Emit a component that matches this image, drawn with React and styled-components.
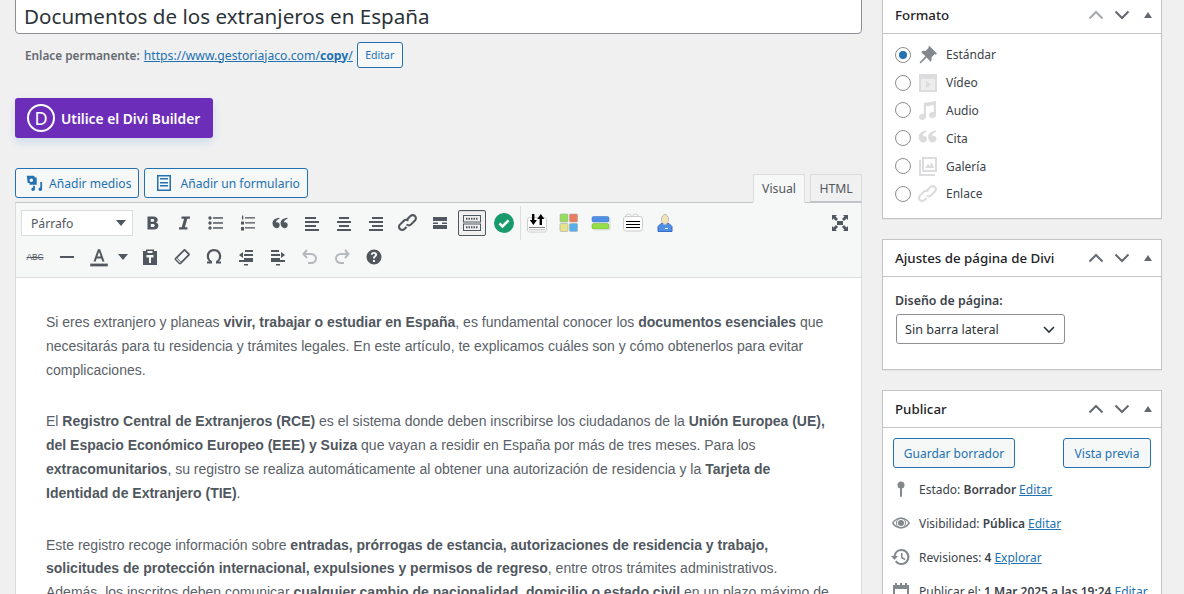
import React from 'react';
import styled, {createGlobalStyle} from 'styled-components';

const GlobalStyle = createGlobalStyle`
  html, body {
    margin: 0;
    height: 594px;
    overflow: hidden;
    background: #f0f0f1;
  }
`;

const uiFont = `"Noto Sans", "Open Sans", sans-serif`;

const Page = styled.div`
  display: flex;
  align-items: flex-start;
  gap: 20px;
  height: 594px;
  overflow: hidden;
  padding: 0 22px 0 15px;
  font-family: ${uiFont};
  font-size: 13px;
  color: #3c434a;
`;

const Main = styled.div`
  width: 847px;
  flex: none;
  margin-top: -7px;
`;

const Side = styled.div`
  width: 280px;
  flex: none;
  margin-top: -4px;
`;

const TitleInput = styled.div`
  height: 41px;
  box-sizing: border-box;
  background: #fff;
  border: 1px solid #8c8f94;
  border-radius: 4px;
  padding: 0 8px;
  font-size: 20.6px;
  line-height: 44px;
  color: #2c3338;
  white-space: nowrap;
`;

const PermaRow = styled.div`
  display: flex;
  align-items: center;
  height: 26px;
  margin: 8px 0 0 10px;
  font-size: 12.2px;
  color: #646970;
`;

const PermaLabel = styled.strong`
  font-size: 11.8px;
  font-weight: 600;
  margin-right: 4px;
`;

const Link = styled.a`
  color: #2271b1;
  text-decoration: underline;
`;

const SmallButton = styled.span`
  display: inline-flex;
  align-items: center;
  justify-content: center;
  box-sizing: border-box;
  width: 46px;
  height: 26px;
  margin-left: 4px;
  border: 1px solid #2271b1;
  border-radius: 3px;
  background: #f6f7f7;
  color: #2271b1;
  font-size: 10.5px;
`;

const DiviButton = styled.div`
  display: flex;
  align-items: center;
  gap: 6px;
  box-sizing: border-box;
  width: 198px;
  height: 40px;
  margin-top: 30px;
  padding-left: 12px;
  background: #6c2eb9;
  border-radius: 3px;
  box-shadow: 0 4px 8px rgba(43, 135, 218, 0.18);
  color: #fff;
  font-size: 13.8px;
  font-weight: 600;
`;

const DiviMark = styled.span`
  display: flex;
  align-items: center;
  justify-content: center;
  box-sizing: border-box;
  width: 28px;
  height: 28px;
  border: 2px solid #fff;
  border-radius: 50%;
  font-size: 18px;
  font-weight: 400;
`;

const EditorTools = styled.div`
  display: flex;
  align-items: flex-end;
  margin-top: 30px;
  height: 34px;
`;

const MediaButton = styled.div`
  display: flex;
  align-items: center;
  gap: 6px;
  box-sizing: border-box;
  height: 30px;
  margin: 0 5px 4px 0;
  padding: 0 7px 0 9px;
  border: 1px solid #2271b1;
  border-radius: 3px;
  background: #f6f7f7;
  color: #2271b1;
  font-size: 12.1px;
`;

const Tabs = styled.div`
  display: flex;
  align-items: flex-start;
  gap: 5px;
  margin-left: auto;
`;

const Tab = styled.div`
  display: flex;
  align-items: center;
  justify-content: center;
  box-sizing: border-box;
  width: 52px;
  height: ${p => (p.$active ? '29px' : '28px')};
  margin-bottom: ${p => (p.$active ? '-1px' : '0')};
  border: 1px solid #dcdcde;
  border-bottom: ${p => (p.$active ? '1px solid #f6f7f7' : '1px solid #c3c4c7')};
  background: ${p => (p.$active ? '#f6f7f7' : '#f0f0f1')};
  color: #50575e;
  font-size: 12.2px;
  position: relative;
`;

const Editor = styled.div`
  border: 1px solid #dcdcde;
  border-top-color: #c3c4c7;
  background: #fff;
`;

const Toolbar = styled.div`
  box-sizing: border-box;
  background: #f6f7f7;
  border-bottom: 1px solid #dcdcde;
  padding: 3px 7px 0 5px;
  height: 75px;
`;

const ToolRow = styled.div`
  display: flex;
  align-items: center;
  height: 34px;
`;

const FormatSelect = styled.div`
  display: flex;
  align-items: center;
  justify-content: space-between;
  box-sizing: border-box;
  width: 112px;
  height: 26px;
  margin-right: 5px;
  padding: 0 6px 0 9px;
  background: #fff;
  border: 1px solid #dcdcde;
  color: #50575e;
  font-size: 12.2px;
`;

const Caret = styled.span`
  width: 0;
  height: 0;
  border-left: 5px solid transparent;
  border-right: 5px solid transparent;
  border-top: 6px solid #50575e;
`;

const ToolBtn = styled.div`
  display: flex;
  align-items: center;
  justify-content: center;
  box-sizing: border-box;
  flex: none;
  width: ${p => p.$w || 28}px;
  height: 26px;
  margin-right: ${p => (p.$tight ? 0 : 4)}px;
  margin-left: ${p => (p.$push ? 'auto' : '0')};
  border: 1px solid ${p => (p.$active ? '#50575e' : 'transparent')};
  border-radius: 2px;
  background: ${p => (p.$active ? '#f0f0f1' : 'transparent')};
  box-shadow: ${p => (p.$active ? 'inset 0 1px 0 #ddd' : 'none')};
  color: ${p => (p.$off ? '#b4b9be' : '#50575e')};
`;

const StrikeLabel = styled.span`
  font-family: "Liberation Sans", Arial, sans-serif;
  font-size: 8.5px;
  letter-spacing: -0.2px;
  text-decoration: line-through;
  color: #50575e;
`;

const ToolDivider = styled.span`
  flex: none;
  width: 1px;
  height: 34px;
  background: #dcdcde;
  margin: 0 2px 0 -2px;
`;

const Content = styled.div`
  padding: 33px 30px 0;
  height: 400px;
  overflow: hidden;
  font-family: "Liberation Sans", Arial, sans-serif;
  font-size: 14px;
  line-height: 23.8px;
  color: #5a6168;
`;

const Para = styled.p`
  margin: 0 0 28px;
  strong {
    color: #50575e;
  }
`;

const Box = styled.section`
  background: #fff;
  border: 1px solid #c3c4c7;
  box-shadow: 0 1px 1px rgba(0, 0, 0, 0.04);
  margin-bottom: 20px;
  height: ${p => p.$h}px;
  box-sizing: border-box;
`;

const BoxHead = styled.header`
  display: flex;
  align-items: center;
  box-sizing: border-box;
  height: 37px;
  padding: 0 0 0 12px;
  border-bottom: 1px solid #c3c4c7;
  font-size: 13.3px;
  font-weight: 500;
  color: #1d2327;
`;

const BoxTitle = styled.span`
  flex: 1;
`;

const HeadIcon = styled.span`
  display: flex;
  align-items: center;
  justify-content: center;
  width: 26px;
  height: 36px;
  color: ${p => (p.$off ? '#a7aaad' : '#646970')};
`;

const FormatList = styled.div`
  padding: 7px 0 0 12px;
`;

const FormatRow = styled.label`
  display: flex;
  align-items: center;
  height: 27.8px;
  font-size: 12px;
  color: #3c434a;
`;

const Radio = styled.span`
  flex: none;
  display: flex;
  align-items: center;
  justify-content: center;
  box-sizing: border-box;
  width: 16px;
  height: 16px;
  margin-right: 8px;
  border: 1px solid #8c8f94;
  border-radius: 50%;
  background: #fff;
  &::after {
    content: '';
    display: ${p => (p.$on ? 'block' : 'none')};
    width: 8px;
    height: 8px;
    border-radius: 50%;
    background: #2271b1;
  }
`;

const FormatIcon = styled.span`
  flex: none;
  display: flex;
  justify-content: center;
  width: 20px;
  margin: 0 8px 0 -1px;
  color: ${p => (p.$on ? '#82878c' : '#dcdcde')};
`;

const FieldLabel = styled.div`
  margin: 15px 0 5px 12px;
  font-size: 12.4px;
  font-weight: 600;
  color: #3c434a;
`;

const PageSelect = styled.div`
  display: flex;
  align-items: center;
  justify-content: space-between;
  box-sizing: border-box;
  width: 169px;
  height: 30px;
  margin-left: 13px;
  padding: 0 8px;
  border: 1px solid #8c8f94;
  border-radius: 3px;
  background: #fff;
  font-size: 12.6px;
  color: #2c3338;
`;

const ActionRow = styled.div`
  display: flex;
  justify-content: space-between;
  padding: 10px 10px 0;
`;

const ActionButton = styled.div`
  display: flex;
  align-items: center;
  justify-content: center;
  box-sizing: border-box;
  width: ${p => p.$w}px;
  height: 30px;
  border: 1px solid #2271b1;
  border-radius: 3px;
  background: #f6f7f7;
  color: #2271b1;
  font-size: 12px;
`;

const MiscList = styled.div`
  padding: 4px 0 0 8px;
`;

const MiscRow = styled.div`
  display: flex;
  align-items: center;
  height: 34px;
  font-size: 12px;
  white-space: nowrap;
  color: #3c434a;
  strong {
    font-weight: 600;
  }
  ${Link} {
    margin-left: 3px;
  }
`;

const MiscIcon = styled.span`
  flex: none;
  display: flex;
  justify-content: center;
  width: 20px;
  margin-right: 8px;
  color: #82878c;
`;

const Icon = ({size = 20, children}) => (
  <svg width={size} height={size} viewBox="0 0 20 20" fill="currentColor" aria-hidden="true">
    {children}
  </svg>
);

const Up = () => (
  <svg width="18" height="18" viewBox="0 0 18 18" fill="none" stroke="currentColor" strokeWidth="2">
    <path d="M2.500 12.500L9 6l6.500 6.500" />
  </svg>
);
const Down = () => (
  <svg width="18" height="18" viewBox="0 0 18 18" fill="none" stroke="currentColor" strokeWidth="2">
    <path d="M2.500 5.500L9 12l6.500-6.500" />
  </svg>
);
const Tri = () => (
  <svg width="10" height="8" viewBox="0 0 10 8" fill="currentColor">
    <path d="M5 1l4 6H1z" />
  </svg>
);

const Lines = ({rows}) => (
  <Icon>
    {rows.map(([x, y, w, h = 2], i) => <rect key={i} x={x} y={y} width={w} height={h} />)}
  </Icon>
);

const pin = 'M11.500 1l7.500 7.500-1.300 1.200-1-.6-3.300 3.300c.5 1.700.2 3.300-.9 4.400L8.700 12.600 2.500 18.500l-1-1 5.900-6.200L3.100 7c1-1.100 2.700-1.400 4.400-.9l3.300-3.300-.6-1z';
const link = 'M17.700 2.300c-1.700-1.700-4.300-1.700-6 0L8.500 5.500l1.500 1.500 3.200-3.200c.9-.9 2.200-.9 3 0s.9 2.100 0 3l-3.900 3.900c-.8.8-2.100.8-3 0l-1.400 1.400c1.700 1.700 4.300 1.700 5.900 0l3.900-3.900c1.700-1.600 1.700-4.200 0-5.900zM7.800 13.200l-1.100 1.100-.1.100-.9.900c-.9.900-2.100.9-3 0s-.9-2.100 0-3l3.900-3.900c.8-.8 2.100-.8 3 0l1.400-1.400c-1.700-1.700-4.300-1.700-5.900 0l-3.900 3.900c-1.700 1.600-1.700 4.200 0 5.900s4.300 1.700 6 0l2.100-2.100z';
const quote = 'M9.500 5.500v.9c-2 .6-3 1.800-3 3.100.2-.1.500-.1.900-.1 1.400 0 2.300 1 2.300 2.300S8.600 14.500 7.100 14.500c-2 0-3.600-1.700-3.600-4.200 0-2.700 2-4.300 6-4.800zm7 0v.9c-2 .6-3 1.800-3 3.100.2-.1.500-.1.900-.1 1.400 0 2.300 1 2.300 2.300s-1.100 2.800-2.600 2.800c-2 0-3.600-1.700-3.600-4.200 0-2.700 2-4.300 6-4.800z';

const ListUl = () => (
  <Icon>
    <circle cx="4" cy="5" r="1.700" /><circle cx="4" cy="10" r="1.700" /><circle cx="4" cy="15" r="1.700" />
    <rect x="7" y="4.200" width="10" height="1.500" /><rect x="7" y="9.200" width="10" height="1.500" /><rect x="7" y="14.200" width="10" height="1.500" />
  </Icon>
);
const ListOl = () => (
  <Icon>
    <rect x="4" y="2.500" width="1.300" height="4" /><rect x="3" y="8.500" width="3" height="3" /><rect x="3" y="14" width="3" height="3.500" />
    <rect x="7" y="4.200" width="10" height="1.300" /><rect x="7" y="9.200" width="10" height="1.300" /><rect x="7" y="14.200" width="10" height="1.300" />
  </Icon>
);
const Kitchen = () => (
  <svg width="20" height="20" viewBox="0 0 20 20" fill="none" stroke="#50575e">
    <rect x="1.500" y="2.500" width="17" height="6.500" />
    <rect x="1.500" y="11" width="17" height="6.500" />
    <path d="M4 5.700h12M4 14.200h12" strokeWidth="2" strokeDasharray="1.500 1" />
  </svg>
);
const Check = () => (
  <svg width="20" height="20" viewBox="0 0 20 20">
    <circle cx="10" cy="10" r="10" fill="#179b6d" />
    <path d="M5.500 10.300l3 3 6-6" fill="none" stroke="#fff" strokeWidth="2.600" />
  </svg>
);
const PluginBreak = () => (
  <svg width="20" height="20" viewBox="0 0 20 20">
    <rect x="0.500" y="4.500" width="19" height="14.500" rx="2" fill="#fff" stroke="#ccc" />
    <path d="M2 14.500h16" stroke="#888" />
    <path d="M2 16.800h16" stroke="#bbb" />
    <path d="M5 1h2.400v6H10l-3.600 5-3.600-5H5zM12.600 12h2.400V6h2.400l-3.600-5-3.600 5h2.400z" fill="#000" />
  </svg>
);
const PluginGrid = () => (
  <svg width="20" height="20" viewBox="0 0 20 20" stroke="#aaa" strokeWidth=".6">
    <rect x="1" y="1" width="8" height="8" rx="1" fill="#94de5a" />
    <rect x="10.500" y="1" width="8" height="8" rx="1" fill="#ec7a5c" />
    <rect x="1" y="10.500" width="8" height="8" rx="1" fill="#e6e38a" />
    <rect x="10.500" y="10.500" width="8" height="8" rx="1" fill="#58aee8" />
  </svg>
);
const PluginBars = () => (
  <svg width="20" height="20" viewBox="0 0 20 20">
    <rect x="1" y="3.500" width="17" height="5.500" rx="1.500" fill="#4f8fe6" stroke="#3c6cc0" strokeWidth=".5" />
    <rect x="1" y="10.500" width="17" height="5.500" rx="1.500" fill="#94de4a" stroke="#6aa82c" strokeWidth=".5" />
    <path d="M3 17h16M19 5v12" stroke="#ddd" />
  </svg>
);
const PluginNote = () => (
  <svg width="20" height="20" viewBox="0 0 20 20">
    <rect x="3" y="1" width="5" height="5" rx="2" fill="#fff" stroke="#ccc" />
    <rect x="10" y="1" width="5" height="5" rx="2" fill="#fff" stroke="#ccc" />
    <rect x="0.500" y="3.500" width="19" height="14.500" rx="2.500" fill="#fff" stroke="#ccc" />
    <path d="M3 8.500h14M3 11.500h14M3 14.500h14" stroke="#000" />
  </svg>
);
const PluginUser = () => (
  <svg width="20" height="20" viewBox="0 0 20 20">
    <path d="M3 18.500v-5l3-3h8l3 3v5z" fill="#4f8fe6" stroke="#3c6cc0" />
    <ellipse cx="10" cy="6.500" rx="3.500" ry="5" fill="#f1e3b5" stroke="#bbb" />
    <rect x="10" y="15" width="3" height="1" fill="#fff" />
  </svg>
);

const formats = [
  ['Estándar', <path d={pin} />],
  ['Vídeo', <><path opacity=".5" d="M1 1h18v18H1z" /><path fillRule="evenodd" d="M1 1h18v18H1zM3 6v11h14V6zM8 8l5 3.500-5 3.500z" /></>],
  ['Audio', <path d="M18 1v14c0 1.700-1.600 3.200-3.500 3.200s-3.500-1.300-3.500-3 1.600-3.200 3.500-3.200c.5 0 .9.100 1.300.2V5L8 6.500v10.300c0 1.700-1.600 3.200-3.500 3.200S1 18.700 1 17s1.600-3.200 3.500-3.200c.5 0 .9.100 1.300.2V3z" />],
  ['Cita', <path transform="translate(-4 -5) scale(1.350)" d={quote} />],
  ['Galería', <path fillRule="evenodd" d="M1 4v16h16v-2H3V4zM4 1h15v15H4zM6 3v11h11V3zM7 12l3-4 2 2 2-4 2 6z" />],
  ['Enlace', <path d={link} />],
];

const App = () => (
  <Page>
    <GlobalStyle />
    <Main>
      <TitleInput>Documentos de los extranjeros en España</TitleInput>
      <PermaRow>
        <PermaLabel>Enlace permanente:</PermaLabel>
        <Link>https://www.gestoriajaco.com/<strong>copy</strong>/</Link>
        <SmallButton>Editar</SmallButton>
      </PermaRow>
      <DiviButton>
        <DiviMark>D</DiviMark>
        Utilice el Divi Builder
      </DiviButton>
      <EditorTools>
        <MediaButton>
          <Icon size={18}>
            <path d="M2 2h8l1 2h2v8H5v-2H3zM7 5a2 2 0 100 4 2 2 0 000-4zM19 9v8a2 2 0 11-2-2V9zM11 13v4a2 2 0 11-2-2v-2z" />
          </Icon>
          Añadir medios
        </MediaButton>
        <MediaButton>
          <Icon size={20}>
            <path fillRule="evenodd" d="M3 2h14v16H3zM4.500 3.500v13h11v-13zM6 5h8v1.500H6zM6 9h8v1.500H6zM6 12h8v1.500H6z" />
          </Icon>
          Añadir un formulario
        </MediaButton>
        <Tabs>
          <Tab $active>Visual</Tab>
          <Tab>HTML</Tab>
        </Tabs>
      </EditorTools>
      <Editor>
        <Toolbar>
          <ToolRow>
            <FormatSelect>Párrafo<Caret /></FormatSelect>
            <ToolBtn><Icon><path fillRule="evenodd" d="M5.500 3.500h6c2.600 0 4.200 1.300 4.200 3.300 0 1.300-.7 2.400-2 2.800 1.700.3 2.700 1.500 2.700 3.200 0 2.200-1.700 3.700-4.500 3.700H5.500zM8.800 6.100v2.600h1.900c1 0 1.500-.5 1.500-1.300s-.5-1.300-1.500-1.300zM8.800 10.900v3h2.200c1.100 0 1.700-.6 1.700-1.500s-.6-1.500-1.700-1.500z" /></Icon></ToolBtn>
            <ToolBtn><Icon><path d="M7.500 3.500H16v2.200h-2.700l-2.400 8.600h2.500v2.200H5v-2.200h2.700l2.400-8.600H7.500z" /></Icon></ToolBtn>
            <ToolBtn><ListUl /></ToolBtn>
            <ToolBtn><ListOl /></ToolBtn>
            <ToolBtn><Icon><path transform="translate(-1.500 -1.500) scale(1.150)" d={quote} /></Icon></ToolBtn>
            <ToolBtn><Lines rows={[[3, 4, 11], [3, 8, 14], [3, 12, 11], [3, 16, 14]]} /></ToolBtn>
            <ToolBtn><Lines rows={[[5, 4, 10], [3, 8, 14], [5, 12, 10], [3, 16, 14]]} /></ToolBtn>
            <ToolBtn><Lines rows={[[6, 4, 11], [3, 8, 14], [6, 12, 11], [3, 16, 14]]} /></ToolBtn>
            <ToolBtn><Icon><path d={link} /></Icon></ToolBtn>
            <ToolBtn><Lines rows={[[3, 4, 14, 4], [3, 9.500, 5, 1.500], [12, 9.500, 5, 1.500], [3, 12, 14, 4]]} /></ToolBtn>
            <ToolBtn $active><Kitchen /></ToolBtn>
            <ToolBtn><Check /></ToolBtn>
            <ToolDivider />
            <ToolBtn><PluginBreak /></ToolBtn>
            <ToolBtn><PluginGrid /></ToolBtn>
            <ToolBtn><PluginBars /></ToolBtn>
            <ToolBtn><PluginNote /></ToolBtn>
            <ToolBtn><PluginUser /></ToolBtn>
            <ToolBtn $push $tight>
              <Icon><path d="M2 2h5L5.500 3.500 8 6 6 8 3.500 5.500 2 7zM18 2v5l-1.500-1.500L14 8l-2-2 2.500-2.500L13 2zM2 18v-5l1.500 1.500L6 12l2 2-2.500 2.500L7 18zM18 18h-5l1.500-1.500L12 14l2-2 2.500 2.500L18 13zM7 8h6v4H7z" /></Icon>
            </ToolBtn>
          </ToolRow>
          <ToolRow>
            <ToolBtn><StrikeLabel>ABC</StrikeLabel></ToolBtn>
            <ToolBtn><Icon><rect x="3" y="9" width="14" height="2" /></Icon></ToolBtn>
            <ToolBtn $tight>
              <Icon size={22}>
                <path fillRule="evenodd" d="M9 3h2l4 11h-2l-.9-2.700H7.900L7 14H5zM8.500 9.600h3L10 5.200z" />
                <rect x="2" y="16" width="16" height="2.500" />
              </Icon>
            </ToolBtn>
            <ToolBtn $w={19}><Caret /></ToolBtn>
            <ToolBtn><Icon><path fillRule="evenodd" d="M3 4h3V2.500h8V4h3v14H3zM7.500 4v2h5V4zM6.500 8v2.500H9V16h2v-5.500h2.500V8z" /></Icon></ToolBtn>
            <ToolBtn><Icon><path fillRule="evenodd" d="M13.500 2.500l4 4c.6.6.6 1.400 0 2L9 17c-.6.600-1.400.6-2 0l-4-4c-.6-.6-.6-1.400 0-2l8.500-8.500c.6-.6 1.400-.6 2 0zM12.500 4l-7 7 3.500 3.500 7-7zM4 12l4 4 .8-.8-4-4z" /></Icon></ToolBtn>
            <ToolBtn><Icon><path d="M3 16.500h5v-2.300C6 13.200 5 11.400 5 9.200c0-3 2-5 5-5s5 2 5 5c0 2.200-1 4-3 5v2.300h5v-2h-2.400c1.700-1.200 2.600-3 2.600-5.300 0-4.200-3-7.100-7.200-7.100S2.800 5 2.800 9.200c0 2.300.9 4.100 2.600 5.300H3z" /></Icon></ToolBtn>
            <ToolBtn><Icon><path d="M9 3h8v2H9zM3 8l4-3v6zM8 7h9v2H8zM8 11h9v2H8zM3 13h14v2H3zM8 17h4v1.500H8z" /></Icon></ToolBtn>
            <ToolBtn><Icon><path d="M3 3h8v2H3zM17 8l-4-3v6zM3 7h9v2H3zM3 11h9v2H3zM3 13h14v2H3zM8 17h4v1.500H8z" /></Icon></ToolBtn>
            <ToolBtn $off>
              <svg width="20" height="20" viewBox="0 0 20 20" fill="none" stroke="currentColor" strokeWidth="2"><path d="M7 3L3.500 7 7 11M4 7h7c3 0 5 2 5 4.500S14 16 11 16H8" /></svg>
            </ToolBtn>
            <ToolBtn $off>
              <svg width="20" height="20" viewBox="0 0 20 20" fill="none" stroke="currentColor" strokeWidth="2"><path d="M13 3l3.500 4L13 11M16 7H9c-3 0-5 2-5 4.500S6 16 9 16h3" /></svg>
            </ToolBtn>
            <ToolBtn><Icon><path fillRule="evenodd" d="M10 2.500a7.500 7.500 0 110 15 7.500 7.500 0 010-15zM9 13v2h2v-2zM10 5C8 5 6.900 6 6.800 7.800h1.900c.1-.8.500-1.100 1.200-1.100s1.100.3 1.100.9c0 .5-.3.800-.9 1.300-.9.700-1.100 1.300-1.100 2.600h2c0-.8.100-1.100.9-1.700.8-.7 1.200-1.300 1.200-2.300C13.100 6 11.900 5 10 5z" /></Icon></ToolBtn>
          </ToolRow>
        </Toolbar>
        <Content>
          <Para>
            Si eres extranjero y planeas <strong>vivir, trabajar o estudiar en España</strong>, es fundamental conocer los <strong>documentos esenciales</strong> que necesitarás para tu residencia y trámites legales. En este artículo, te explicamos cuáles son y cómo obtenerlos para evitar complicaciones.
          </Para>
          <Para>
            El <strong>Registro Central de Extranjeros (RCE)</strong> es el sistema donde deben inscribirse los ciudadanos de la <strong>Unión Europea (UE), del Espacio Económico Europeo (EEE) y Suiza</strong> que vayan a residir en España por más de tres meses. Para los <strong>extracomunitarios</strong>, su registro se realiza automáticamente al obtener una autorización de residencia y la <strong>Tarjeta de Identidad de Extranjero (TIE)</strong>.
          </Para>
          <Para>
            Este registro recoge información sobre <strong>entradas, prórrogas de estancia, autorizaciones de residencia y trabajo, solicitudes de protección internacional, expulsiones y permisos de regreso</strong>, entre otros trámites administrativos. Además, los inscritos deben comunicar <strong>cualquier cambio de nacionalidad, domicilio o estado civil</strong> en un plazo máximo de
          </Para>
        </Content>
      </Editor>
    </Main>
    <Side>
      <Box $h={223}>
        <BoxHead>
          <BoxTitle>Formato</BoxTitle>
          <HeadIcon $off><Up /></HeadIcon>
          <HeadIcon><Down /></HeadIcon>
          <HeadIcon><Tri /></HeadIcon>
        </BoxHead>
        <FormatList>
          {formats.map(([label, shape], i) => (
            <FormatRow key={label}>
              <Radio $on={i === 0} />
              <FormatIcon $on={i === 0}><Icon>{shape}</Icon></FormatIcon>
              {label}
            </FormatRow>
          ))}
        </FormatList>
      </Box>
      <Box $h={131}>
        <BoxHead>
          <BoxTitle>Ajustes de página de Divi</BoxTitle>
          <HeadIcon><Up /></HeadIcon>
          <HeadIcon><Down /></HeadIcon>
          <HeadIcon><Tri /></HeadIcon>
        </BoxHead>
        <FieldLabel>Diseño de página:</FieldLabel>
        <PageSelect>
          Sin barra lateral
          <svg width="14" height="14" viewBox="0 0 14 14" fill="none" stroke="#2c3338" strokeWidth="1.600"><path d="M2 5l5 5 5-5" /></svg>
        </PageSelect>
      </Box>
      <Box $h={300}>
        <BoxHead>
          <BoxTitle>Publicar</BoxTitle>
          <HeadIcon><Up /></HeadIcon>
          <HeadIcon><Down /></HeadIcon>
          <HeadIcon><Tri /></HeadIcon>
        </BoxHead>
        <ActionRow>
          <ActionButton $w={122}>Guardar borrador</ActionButton>
          <ActionButton $w={88}>Vista previa</ActionButton>
        </ActionRow>
        <MiscList>
          <MiscRow>
            <MiscIcon><Icon><circle cx="10" cy="6" r="3.500" /><rect x="9" y="8" width="2" height="10" rx="1" /></Icon></MiscIcon>
            Estado:&nbsp;<strong>Borrador</strong><Link>Editar</Link>
          </MiscRow>
          <MiscRow>
            <MiscIcon><Icon><circle cx="10" cy="10" r="3" /><path fillRule="evenodd" d="M10 4.500c4 0 7.500 2.500 9 5.500-1.500 3-5 5.500-9 5.500S2.500 13 1 10c1.500-3 5-5.500 9-5.500zM10 6a4 4 0 100 8 4 4 0 000-8zM2.700 10c1 1.500 2.300 2.700 3.800 3.400C5.500 12.500 5 11.300 5 10s.5-2.500 1.500-3.400C5 7.300 3.700 8.500 2.700 10zM17.300 10c-1-1.500-2.300-2.700-3.800-3.400 1 .9 1.500 2.100 1.500 3.400s-.5 2.500-1.500 3.400c1.500-.7 2.800-1.900 3.800-3.400z" /></Icon></MiscIcon>
            Visibilidad:&nbsp;<strong>Pública</strong><Link>Editar</Link>
          </MiscRow>
          <MiscRow>
            <MiscIcon><Icon><path fillRule="evenodd" d="M10.500 2a8 8 0 110 16 8 8 0 01-6.500-3.300l1.500-1.100A6 6 0 1010.500 4 6 6 0 004.600 9H7l-3.500 4L0 9h2.500a8 8 0 018-7zM10 6h1.500v4l3 2-.8 1.200L10 11z" /></Icon></MiscIcon>
            Revisiones:&nbsp;<strong>4</strong><Link>Explorar</Link>
          </MiscRow>
          <MiscRow>
            <MiscIcon><Icon><path fillRule="evenodd" d="M2 4h2V2h2v2h3V2h2v2h3V2h2v2h2v14H2zM4 8v8h12V8z" /></Icon></MiscIcon>
            Publicar el:&nbsp;<strong>1 Mar 2025 a las 19:24</strong><Link>Editar</Link>
          </MiscRow>
        </MiscList>
      </Box>
    </Side>
  </Page>
);

export default App;
